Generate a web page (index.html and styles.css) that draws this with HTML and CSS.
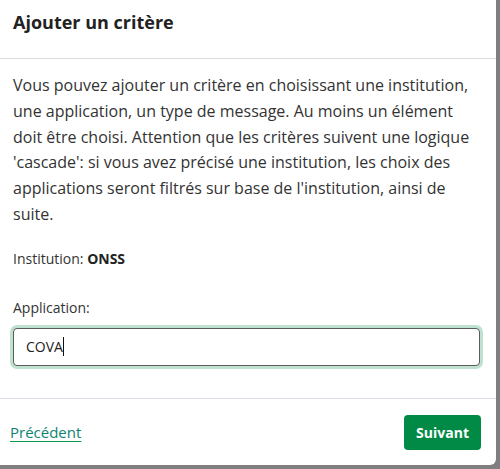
FILE: index.html
```html
<!DOCTYPE html>
<html lang="fr">
<head>
<meta charset="utf-8">
<title>Ajouter un critère</title>
<link rel="stylesheet" href="styles.css">
</head>
<body>
<div class="modal">
  <div class="modal-header">
    <h2 class="modal-title">Ajouter un critère</h2>
  </div>
  <div class="modal-body">
    <p class="intro">Vous pouvez ajouter un critère en choisissant une institution, une application, un type de message. Au moins un élément doit être choisi. Attention que les critères suivent une logique 'cascade': si vous avez précisé une institution, les choix des applications seront filtrés sur base de l'institution, ainsi de suite.</p>
    <p class="field-info">Institution: <strong>ONSS</strong></p>
    <label class="field-label" for="app">Application:</label>
    <div class="input-wrap">
      <div class="input"><span class="input-value">COVA</span><span class="caret"></span></div>
    </div>
  </div>
  <div class="modal-footer">
    <a class="link" href="#">Précédent</a>
    <button class="btn-primary" type="button">Suivant</button>
  </div>
</div>
</body>
</html>
```

FILE: styles.css
```css
* { box-sizing: border-box; }
html, body { margin: 0; padding: 0; }
body {
  background: #7f7f7f;
  width: 500px;
  height: 469px;
  overflow: hidden;
  font-family: "Open Sans", "Liberation Sans", sans-serif;
  color: #333;
}
.modal {
  width: 496px;
  height: 465px;
  background: #fff;
  border-bottom-right-radius: 6px;
  display: flex;
  flex-direction: column;
}
.modal-header {
  height: 59px;
  padding: 0 13px;
  border-bottom: 1px solid #dcdcdc;
  display: flex;
  align-items: flex-start;
}
.modal-title {
  margin: 9px 0 0;
  font-size: 18px;
  line-height: 26px;
  font-weight: 700;
  color: #222;
}
.modal-body {
  padding: 14px 13px 0;
  flex: 1;
}
.intro {
  margin: 0;
  font-size: 16px;
  line-height: 25.8px;
  color: #333;
}
.field-info {
  margin: 20px 0 0;
  font-size: 14px;
  line-height: 21px;
  color: #333;
}
.field-info strong { font-weight: 700; color: #222; }
.field-label {
  display: block;
  margin-top: 28px;
  font-size: 14px;
  line-height: 21px;
  color: #333;
}
.input-wrap {
  margin: 7px 0 0 -3px;
  width: 473px;
  padding: 3px;
  border-radius: 7px;
  background: #bfe1cf;
}
.input {
  height: 38px;
  background: #fff;
  border: 1px solid #5c5c5c;
  border-radius: 4px;
  padding: 0 12px;
  display: flex;
  align-items: center;
  font-size: 14px;
  color: #222;
}
.caret {
  display: inline-block;
  width: 1px;
  height: 19px;
  background: #111;
}
.modal-footer {
  height: 67px;
  border-top: 1px solid #dedde6;
  padding: 0 15px 0 10px;
  display: flex;
  align-items: center;
  justify-content: space-between;
}
.link {
  font-size: 15px;
  color: #0d8470;
  text-decoration: underline;
  text-decoration-color: #0a9a4a;
  text-underline-offset: 3px;
}
.btn-primary {
  height: 35px;
  padding: 0 12px;
  border: none;
  border-radius: 4px;
  background: #008a45;
  color: #fff;
  font-family: "Open Sans", "Liberation Sans", sans-serif;
  font-size: 14px;
  font-weight: 700;
}
```
